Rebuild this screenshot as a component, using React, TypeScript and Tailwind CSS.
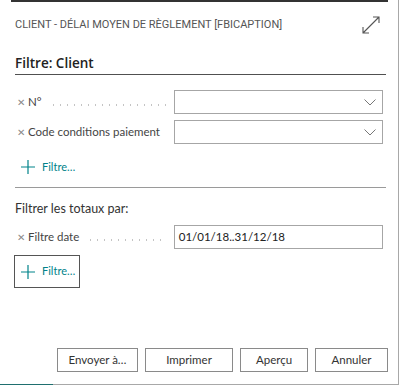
import { ReactNode } from 'react'

const font = { fontFamily: 'Lato, "Open Sans", sans-serif' }

function Chevron() {
  return (
    <svg width="12" height="7" viewBox="0 0 12 7" className="mr-[6px]">
      <path d="M0.5 0.5 L6 6 L11.5 0.5" fill="none" stroke="#777" strokeWidth="1" />
    </svg>
  )
}

function Plus() {
  return (
    <svg width="14" height="14" viewBox="0 0 14 14">
      <path d="M7 0 V14 M0 7 H14" stroke="#00838a" strokeWidth="1.2" />
    </svg>
  )
}

function FilterRow({ label, children }: { label: string; children: ReactNode }) {
  return (
    <div className="flex items-center h-[24px]">
      <div className="flex items-center w-[160px] pr-[8px] overflow-hidden text-[11.5px] h-full">
        <span className="text-[#8a8a8a] text-[10px] mr-[3px] ml-[2px]">✕</span>
        <span className="text-[#444] whitespace-nowrap">{label}</span>
        <span className="flex-1 ml-[8px] h-[2px] mt-[6px] bg-[radial-gradient(circle,#c4c4c4_1px,transparent_1px)] bg-[length:7px_2px]"></span>
      </div>
      <div className="w-[211px] h-[24px] border border-[#a6a6a6] flex items-center justify-between pl-[4px]">
        {children}
      </div>
    </div>
  )
}

export default function App() {
  return (
    <div className="w-[401px] h-[385px] bg-white overflow-hidden" style={font}>
      <div className="w-[399px] h-[385px] border-r border-[#a8a8a8] flex flex-col">
        <div className="h-[2px] ml-[11px] w-[377px] bg-[#333]"></div>
        <div className="flex items-center justify-between pl-[15px] pr-[18px] mt-[14px] h-[18px]">
          <span
            className="text-[11px] text-[#555] uppercase"
            style={{ fontFamily: 'Roboto, "Liberation Sans", sans-serif' }}
          >
            Client - Délai moyen de règlement [FBICAPTION]
          </span>
          <svg width="18" height="18" viewBox="0 0 18 18">
            <path
              d="M1 17 L17 1 M11 1 H17 V7 M1 11 V17 H7"
              fill="none"
              stroke="#555"
              strokeWidth="1.1"
            />
          </svg>
        </div>
        <div className="mx-[15px] mt-[19px] w-[371px] border-b border-[#505050] pb-[1px]">
          <span
            className="block text-[13.5px] leading-[20px] font-semibold text-[#222]"
            style={{ fontFamily: '"Open Sans", sans-serif' }}
          >
            Filtre: Client
          </span>
        </div>
        <div className="mx-[15px] mt-[15px] flex flex-col gap-[6px]">
          <FilterRow label="N°">
            <span></span>
            <Chevron />
          </FilterRow>
          <FilterRow label="Code conditions paiement">
            <span></span>
            <Chevron />
          </FilterRow>
        </div>
        <div className="mx-[15px] mt-[13px] flex items-center gap-[7px] pl-[6px] h-[20px]">
          <Plus />
          <span className="text-[11px] text-[#00838a]">Filtre…</span>
        </div>
        <div className="mx-[15px] mt-[10px] w-[371px] h-px bg-[#9a9a9a]"></div>
        <div className="mx-[15px] mt-[11px] text-[12.5px] leading-[20px] text-[#333]">
          Filtrer les totaux par:
        </div>
        <div className="mx-[15px] mt-[6px]">
          <FilterRow label="Filtre date">
            <span className="text-[11.5px] text-[#222]">01/01/18..31/12/18</span>
          </FilterRow>
        </div>
        <div className="ml-[14px] mt-[6px] w-[66px] h-[33px] border border-[#555] flex items-center gap-[7px] pl-[6px]">
          <Plus />
          <span className="text-[11px] text-[#00838a]">Filtre…</span>
        </div>
        <div className="flex-1"></div>
        <div className="flex justify-end gap-[7px] pr-[10px] mb-[12px]">
          <button className="w-[81px] h-[24px] border border-[#8a8a8a] text-[11.5px] text-[#333]">
            Envoyer à…
          </button>
          <button className="w-[88px] h-[24px] border border-[#8a8a8a] text-[11.5px] text-[#333]">
            Imprimer
          </button>
          <button className="w-[68px] h-[24px] border border-[#8a8a8a] text-[11.5px] text-[#333]">
            Aperçu
          </button>
          <button className="w-[73px] h-[24px] border border-[#8a8a8a] text-[11.5px] text-[#333]">
            Annuler
          </button>
        </div>
        <div className="flex h-px">
          <div className="w-[53px] bg-[#1f6f6f]"></div>
          <div className="flex-1 bg-[#a8a8a8]"></div>
        </div>
      </div>
    </div>
  )
}
